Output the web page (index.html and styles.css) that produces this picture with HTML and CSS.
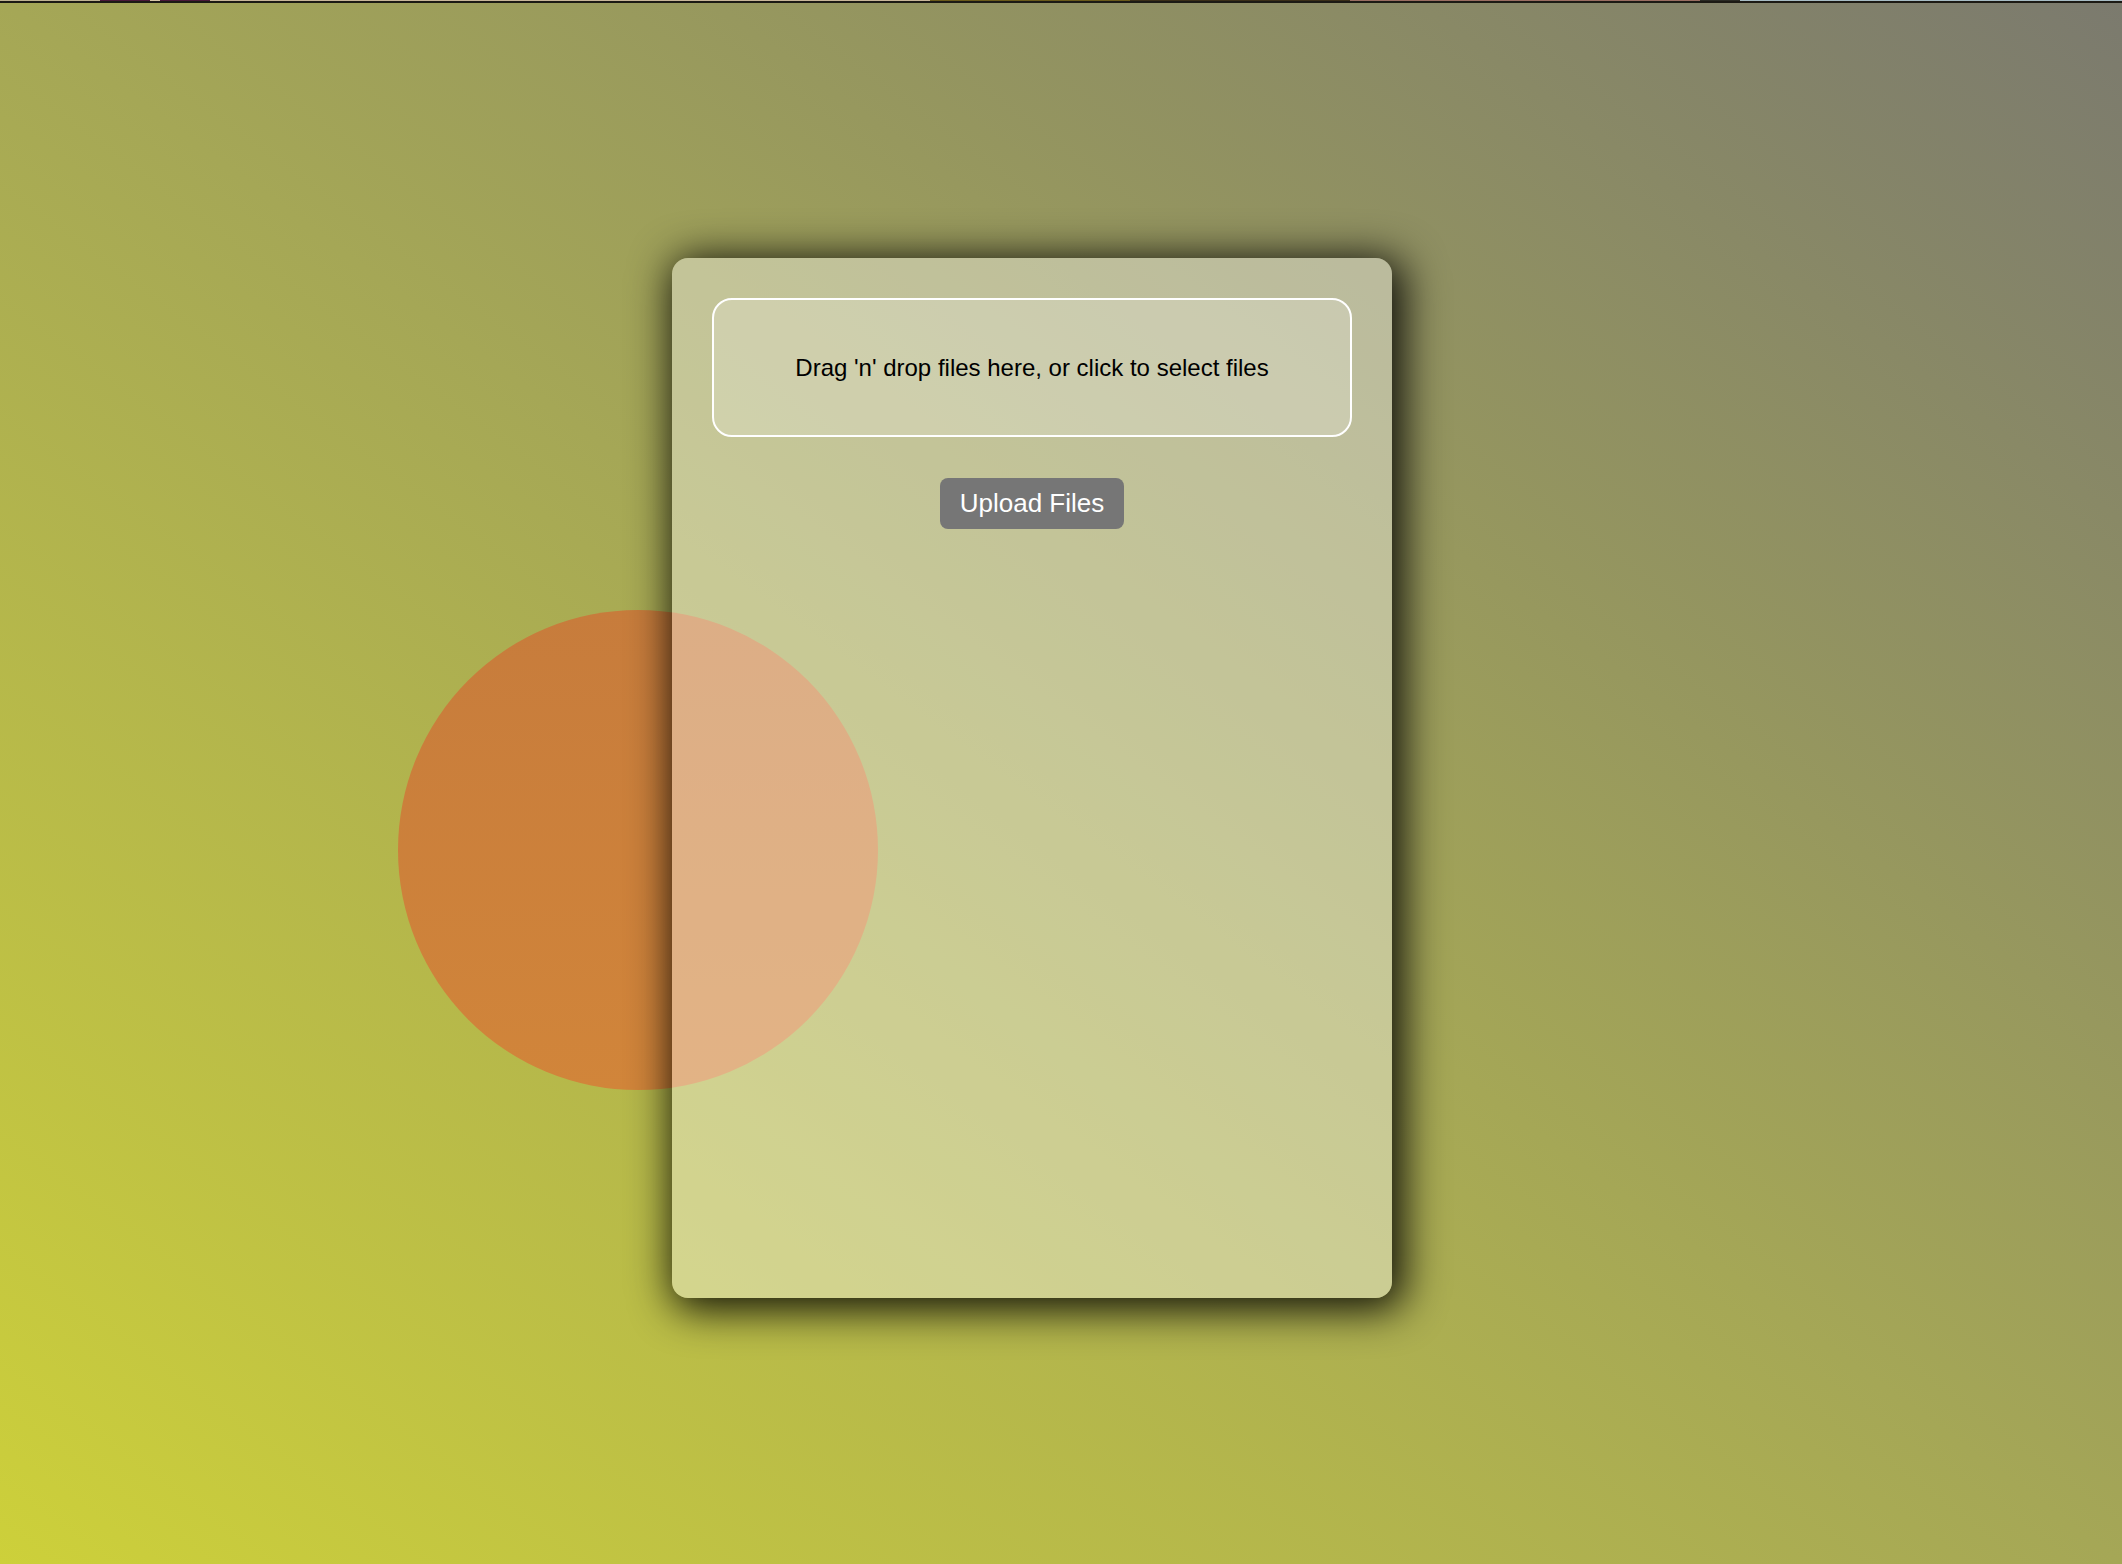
FILE: index.html
```html
<!DOCTYPE html>
<html lang="en">
<head>
<meta charset="utf-8">
<title>Upload</title>
<link rel="stylesheet" href="styles.css">
</head>
<body>
<div class="topstrip"></div>
<main class="stage">
  <div class="wrap">
    <div class="blob"></div>
    <section class="card">
      <div class="dropzone">
        <p>Drag 'n' drop files here, or click to select files</p>
      </div>
      <button class="upload" type="button">Upload Files</button>
    </section>
  </div>
</main>
</body>
</html>
```

FILE: styles.css
```css
html, body {
  margin: 0;
  padding: 0;
  height: 100%;
}

body {
  font-family: "Liberation Sans", Arial, sans-serif;
  background: linear-gradient(to top right, #cdd03a 0%, #a5a756 50%, #7b7a6e 100%);
  overflow: hidden;
}

.topstrip {
  height: 3px;
  background:
    linear-gradient(to bottom, transparent 0 1px, #1c1a14 1px 3px),
    linear-gradient(to right,
      #bfb392 0 100px, #4a1838 100px 150px, #d8c8a8 150px 160px, #4a1838 160px 210px,
      #c9b79a 210px 930px, #6a5a1a 930px 1130px, #3a2e18 1130px 1350px,
      #9a6e62 1350px 1700px, #2a2a24 1700px 1740px, #a8bcc4 1740px 100%);
}

.stage {
  height: calc(100% - 3px);
  display: flex;
  align-items: center;
  justify-content: center;
  padding-right: 58px;
  padding-bottom: 12px;
  box-sizing: border-box;
}

.wrap {
  position: relative;
}

.blob {
  position: absolute;
  left: -274px;
  top: 352px;
  width: 480px;
  height: 480px;
  border-radius: 50%;
  background: linear-gradient(to bottom, #c77c3c, #d1853a);
  z-index: 0;
}

.card {
  position: relative;
  z-index: 1;
  width: 720px;
  height: 1040px;
  box-sizing: border-box;
  padding: 40px;
  border-radius: 16px;
  background: rgba(255, 255, 255, 0.38);
  box-shadow: 6px 6px 42px 6px rgba(0, 0, 0, 0.9);
  display: flex;
  flex-direction: column;
  align-items: center;
  gap: 41px;
}

.dropzone {
  width: 100%;
  box-sizing: border-box;
  border: 2px solid #ffffff;
  border-radius: 20px;
  background: rgba(255, 255, 255, 0.2);
  padding: 54px 0;
  text-align: center;
}

.dropzone p {
  margin: 0;
  font-size: 24px;
  line-height: 27px;
  color: #000;
}

.upload {
  font-family: "Liberation Sans", Arial, sans-serif;
  font-size: 26px;
  line-height: 31px;
  color: #fff;
  background: #767676;
  border: none;
  border-radius: 8px;
  padding: 10px 20px;
  cursor: pointer;
}
```
